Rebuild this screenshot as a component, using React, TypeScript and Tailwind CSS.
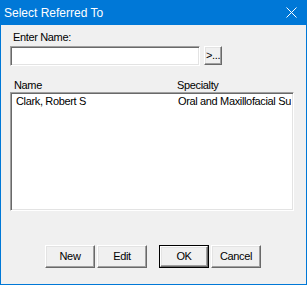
import React from 'react';

const raised =
  'border border-t-white border-l-white border-r-[#696969] border-b-[#696969] shadow-[inset_-1px_-1px_0_#a0a0a0,inset_1px_1px_0_#e3e3e3]';

const sunken =
  'bg-white border border-t-[#a0a0a0] border-l-[#a0a0a0] border-r-white border-b-white shadow-[inset_1px_1px_0_#696969,inset_-1px_-1px_0_#e3e3e3]';

function Btn({ label, isDefault }: { label: string; isDefault?: boolean }) {
  if (isDefault) {
    return (
      <div className="w-[50px] h-[23px] border border-black">
        <button className={`w-full h-full bg-[#f0f0f0] ${raised} flex items-center justify-center`}>{label}</button>
      </div>
    );
  }
  return (
    <button className={`w-[50px] h-[23px] bg-[#f0f0f0] ${raised} flex items-center justify-center`}>{label}</button>
  );
}

export default function App() {
  return (
    <div
      className="w-[307px] h-[285px] flex flex-col border border-t-0 border-[#0078d7] text-black text-[11px] leading-[13px] tracking-[-0.35px]"
      style={{ fontFamily: '"Liberation Sans", Arial, sans-serif' }}
    >
      {/* title bar */}
      <div className="h-[25px] bg-[#0078d7] flex items-center justify-between pl-[3px] pr-[9px] text-white tracking-normal">
        <span className="text-[12px] leading-[16px]">Select Referred To</span>
        <svg width="11" height="11" viewBox="0 0 11 11">
          <path d="M0.5 0.5 L10.5 10.5 M10.5 0.5 L0.5 10.5" stroke="white" strokeWidth="1" />
        </svg>
      </div>

      <div className="flex-1 bg-[#f0f0f0] flex flex-col pt-[6px] pl-[9px]">
        <div className="pl-[3px]">Enter Name:</div>
        <div className="flex items-start gap-[4px] mt-[2px]">
          <div className={`w-[190px] h-[20px] ${sunken}`} />
          <button className={`w-[18px] h-[19px] bg-[#f0f0f0] ${raised} flex items-center justify-center leading-[10px] pb-[2px]`}>
            &gt;...
          </button>
        </div>

        <div className="flex mt-[13px] pl-[4px]">
          <span className="w-[163px]">Name</span>
          <span>Specialty</span>
        </div>

        <div className={`w-[284px] h-[119px] ${sunken} p-[2px] overflow-hidden`}>
          <div className="flex pl-[3px] whitespace-nowrap overflow-hidden">
            <span className="w-[162px] shrink-0">Clark, Robert S</span>
            <span className="overflow-hidden">Oral and Maxillofacial Su</span>
          </div>
        </div>

        <div className="flex mt-[34px] ml-[35px]">
          <div className="flex gap-[2px]">
            <Btn label="New" />
            <Btn label="Edit" />
          </div>
          <div className="flex gap-[2px] ml-[12px]">
            <Btn label="OK" isDefault />
            <Btn label="Cancel" />
          </div>
        </div>
      </div>
    </div>
  );
}
